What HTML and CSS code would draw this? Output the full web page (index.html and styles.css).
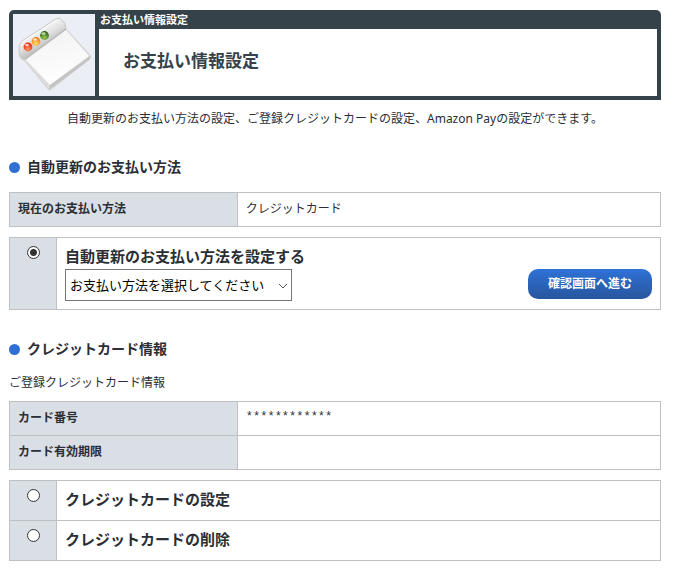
FILE: index.html
```html
<!DOCTYPE html>
<html lang="ja">
<head>
<meta charset="utf-8">
<meta name="viewport" content="width=device-width, initial-scale=1">
<title>お支払い情報設定</title>
<link rel="stylesheet" href="styles.css">
</head>
<body>
<main>
  <header class="page-header">
    <div class="page-icon">
      <svg viewBox="0 0 82 82" aria-hidden="true">
        <defs>
          <linearGradient id="bar" gradientUnits="userSpaceOnUse" x1="24" y1="15" x2="33" y2="30">
            <stop offset="0" stop-color="#f6f6f6"/>
            <stop offset="0.5" stop-color="#e4e4e4"/>
            <stop offset="1" stop-color="#c6c6c6"/>
          </linearGradient>
          <linearGradient id="sheet" x1="0.4" y1="0" x2="0.6" y2="1">
            <stop offset="0" stop-color="#f3f3f3"/>
            <stop offset="1" stop-color="#ffffff"/>
          </linearGradient>
          <radialGradient id="red" cx="0.5" cy="0.75" r="0.65">
            <stop offset="0" stop-color="#ff9a68"/>
            <stop offset="1" stop-color="#e32b0c"/>
          </radialGradient>
          <radialGradient id="amber" cx="0.5" cy="0.75" r="0.65">
            <stop offset="0" stop-color="#ffdc70"/>
            <stop offset="1" stop-color="#ee8010"/>
          </radialGradient>
          <radialGradient id="green" cx="0.5" cy="0.75" r="0.65">
            <stop offset="0" stop-color="#9bc95a"/>
            <stop offset="1" stop-color="#2f6510"/>
          </radialGradient>
        </defs>
        <path d="M11 46 L53 15 L77 41 Q78 43 77 45 L37 76 L35 75 Z" fill="#dcdcdc" stroke="#c8c8c8" stroke-width="0.7"/>
        <path d="M13 46 L53 16 L76 42 L37 71 Z" fill="url(#sheet)"/>
        <path d="M37 71 L77 42 L77 45 L36 76 Z" fill="#c4c4c4"/>
        <path d="M11 46 Q6 45 6 37 Q5 31 9 27 L43 5 Q47 3 49 6 Q53 9 53 15 L12 45 Z" fill="url(#bar)" stroke="#c8c8c8" stroke-width="1"/>
        <path d="M8 31 Q8 29 11 27 L44 6" fill="none" stroke="#ffffff" stroke-width="1"/>
        <path d="M12 45 L53 15" stroke="#b0b0b0" stroke-width="1"/>
        <circle cx="15" cy="33" r="4.4" fill="url(#red)"/>
        <circle cx="23" cy="27.5" r="4.4" fill="url(#amber)"/>
        <circle cx="31.5" cy="21.5" r="4.4" fill="url(#green)"/>
        <ellipse cx="14" cy="31" rx="2" ry="1.2" fill="#ffffff" opacity="0.7"/>
        <ellipse cx="22" cy="25.5" rx="2" ry="1.2" fill="#ffffff" opacity="0.7"/>
        <ellipse cx="30.5" cy="19.5" rx="2" ry="1.2" fill="#ffffff" opacity="0.7"/>
      </svg>
    </div>
    <div class="page-titles">
      <p class="page-category">お支払い情報設定</p>
      <h1>お支払い情報設定</h1>
    </div>
  </header>
  <p class="lead">自動更新のお支払い方法の設定、ご登録クレジットカードの設定、Amazon Payの設定ができます。</p>

  <form>
    <section>
      <h2>自動更新のお支払い方法</h2>
      <table class="details">
        <tr><th scope="row">現在のお支払い方法</th><td>クレジットカード</td></tr>
      </table>
      <div class="options">
        <div class="option">
          <div class="option-mark"><input type="radio" name="action" id="renewal" checked></div>
          <div class="option-body">
            <label class="option-label" for="renewal">自動更新のお支払い方法を設定する</label>
            <div class="option-controls">
              <div class="select-box">
                <select aria-label="お支払い方法">
                  <option>お支払い方法を選択してください</option>
                  <option>クレジットカード</option>
                  <option>Amazon Pay</option>
                </select>
                <svg class="chevron" viewBox="0 0 10 6" aria-hidden="true"><path d="M1 1 L5 5 L9 1"/></svg>
              </div>
              <button type="button">確認画面へ進む</button>
            </div>
          </div>
        </div>
      </div>
    </section>

    <section>
      <h2>クレジットカード情報</h2>
      <p class="note">ご登録クレジットカード情報</p>
      <table class="details">
        <tr><th scope="row">カード番号</th><td class="masked">************</td></tr>
        <tr><th scope="row">カード有効期限</th><td></td></tr>
      </table>
      <div class="options">
        <div class="option">
          <div class="option-mark"><input type="radio" name="action" id="card-set"></div>
          <div class="option-body"><label class="option-label" for="card-set">クレジットカードの設定</label></div>
        </div>
        <div class="option">
          <div class="option-mark"><input type="radio" name="action" id="card-delete"></div>
          <div class="option-body"><label class="option-label" for="card-delete">クレジットカードの削除</label></div>
        </div>
      </div>
    </section>
  </form>
</main>
</body>
</html>
```
FILE: styles.css
```css
* {
  box-sizing: border-box;
}

body {
  margin: 10px 14px 0 9px;
  background: #fff;
  color: #2b2e35;
  font-family: "Noto Sans", "Noto Sans CJK JP", sans-serif;
  font-size: 12px;
  line-height: 17px;
}

h1,
h2,
p {
  margin: 0;
}

.page-header {
  display: flex;
  gap: 4px;
  padding: 4px;
  border-radius: 5px 5px 0 0;
  background: #364249;
}

.page-icon {
  flex: none;
  width: 82px;
  height: 82px;
  background: #ebeff5;
}

.page-icon svg {
  display: block;
}

.page-titles {
  flex: 1;
  display: flex;
  flex-direction: column;
}

.page-category {
  padding: 0 1px 4px;
  color: #fff;
  font-size: 11px;
  font-weight: bold;
  line-height: 11px;
}

h1 {
  flex: 1;
  display: flex;
  align-items: center;
  padding: 0 24px 4px;
  background: #fff;
  color: #364249;
  font-size: 17px;
  line-height: 24px;
}

.lead {
  margin: 10px 0 30px;
  text-align: center;
}

h2 {
  display: flex;
  align-items: center;
  gap: 7px;
  margin: 29px 0 15px;
  font-size: 14px;
  line-height: 20px;
}

h2::before {
  content: "";
  width: 11px;
  height: 11px;
  border-radius: 50%;
  background: #2f70d4;
}

.note {
  margin-bottom: 10px;
}

.details {
  width: 100%;
  border-collapse: collapse;
}

.details th,
.details td {
  height: 34px;
  padding: 7px 8px 9px;
  border: 1px solid #bec1c4;
  text-align: left;
}

.details th {
  width: 35%;
  background: #dadfe6;
}

.details .masked {
  font-family: "Liberation Mono", monospace;
}

.options {
  margin-top: 10px;
  border: 1px solid #bec1c4;
}

.option {
  display: grid;
  grid-template-columns: 47px 1fr;
}

.option + .option {
  border-top: 1px solid #bec1c4;
}

.option-mark {
  padding-top: 8px;
  border-right: 1px solid #bec1c4;
  background: #dadfe6;
}

.option-mark input {
  appearance: none;
  display: block;
  width: 13px;
  height: 13px;
  margin: 0 auto;
  border: 1px solid #333;
  border-radius: 50%;
  background: #fff;
}

.option-mark input:checked {
  background: radial-gradient(circle, #333 3px, #fff 4px);
}

.option-body {
  padding: 7px 8px 9px;
}

.option-label {
  display: block;
  font-size: 15px;
  font-weight: bold;
  line-height: 23px;
}

.option-controls {
  display: flex;
  justify-content: space-between;
  align-items: flex-start;
  margin: 1px 0 -1px;
}

.select-box {
  position: relative;
}

select {
  appearance: none;
  display: block;
  width: 227px;
  height: 32px;
  padding: 0 20px 0 4px;
  border: 1px solid #767676;
  border-radius: 0;
  background: #fff;
  color: #000;
  font-family: inherit;
  font-size: 13px;
}

.chevron {
  position: absolute;
  top: 14px;
  right: 4px;
  width: 10px;
  height: 6px;
  fill: none;
  stroke: #555;
  pointer-events: none;
}

button {
  height: 30px;
  padding: 0 20px;
  border: 0;
  border-radius: 10px;
  background: linear-gradient(#2f72d8, #27559c);
  color: #fff;
  font-family: inherit;
  font-size: 12px;
  font-weight: bold;
  line-height: 28px;
}
```
